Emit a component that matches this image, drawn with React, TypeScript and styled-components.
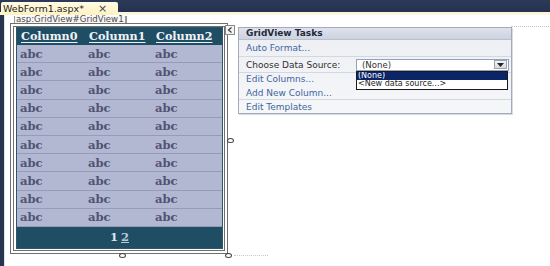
import { FC } from 'react';
import styled, { createGlobalStyle } from 'styled-components';

const GlobalStyle = createGlobalStyle`
  html, body {
    margin: 0;
    padding: 0;
    background: #ffffff;
  }
  #root {
    width: 550px;
    height: 266px;
    overflow: hidden;
  }
`;

const rows = Array.from({ length: 10 });
const columns = ['Column0', 'Column1', 'Column2'];

const App: FC = () => {
  return (
    <Page>
      <GlobalStyle />
      <TopBar>
        <Tab>
          WebForm1.aspx*
          <TabClose>×</TabClose>
        </Tab>
      </TopBar>
      <Body>
        <LeftStrip />
        <Designer>
          <TagLabel>asp:GridView#GridView1</TagLabel>
          <DesignRow>
            <Frame>
              <Grid>
                <GridRow $head>
                  {columns.map((c) => (
                    <HeadCell key={c}>{c}</HeadCell>
                  ))}
                </GridRow>
                {rows.map((_, i) => (
                  <GridRow key={i}>
                    <Cell>abc</Cell>
                    <Cell>abc</Cell>
                    <Cell>abc</Cell>
                  </GridRow>
                ))}
                <Pager>
                  <PageCurrent>1</PageCurrent>
                  <PageLink>2</PageLink>
                </Pager>
              </Grid>
              <SmartTag>
                <svg width='6' height='6' viewBox='0 0 6 6'>
                  <path d='M4.5 0.5 L1.5 3 L4.5 5.5' fill='none' stroke='#333' strokeWidth='1.1' />
                </svg>
              </SmartTag>
              <Handle $left={105} $top={226} />
              <Handle $left={213} $top={111} />
              <Handle $left={211} $top={226} />
              <Trail />
            </Frame>
            <TaskPanel>
              <PanelHeader>GridView Tasks</PanelHeader>
              <Section $h={16}>
                <TaskLink>Auto Format...</TaskLink>
              </Section>
              <Section $h={15}>
                <ChooseLabel>Choose Data Source:</ChooseLabel>
                <Combo>
                  <ComboValue>(None)</ComboValue>
                  <ComboButton>
                    <svg width='7' height='4' viewBox='0 0 7 4'>
                      <path d='M0 0 H7 L3.5 4 Z' fill='#222' />
                    </svg>
                  </ComboButton>
                  <DropList>
                    <DropItem $selected>(None)</DropItem>
                    <DropItem>&lt;New data source...&gt;</DropItem>
                  </DropList>
                </Combo>
              </Section>
              <Section $h={26} $column>
                <TaskLink>Edit Columns...</TaskLink>
                <TaskLink>Add New Column...</TaskLink>
              </Section>
              <Section $h={13} $last>
                <TaskLink>Edit Templates</TaskLink>
              </Section>
            </TaskPanel>
          </DesignRow>
        </Designer>
      </Body>
    </Page>
  );
};

export default App;

const Page = styled.div`
  width: 550px;
  height: 266px;
  display: flex;
  flex-direction: column;
  background: #ffffff;
  font-family: 'DejaVu Sans', Verdana, sans-serif;
`;

const TopBar = styled.div`
  height: 15px;
  flex-shrink: 0;
  display: flex;
  align-items: flex-end;
  background: linear-gradient(to bottom, #2b3a58 0, #25324e 12px, #fbf3d2 12px, #fdf8e6 15px);
`;

const Tab = styled.div`
  height: 13px;
  width: 117px;
  margin-left: 1px;
  box-sizing: border-box;
  padding-left: 2px;
  display: flex;
  align-items: center;
  background: linear-gradient(to bottom, #fffbe4, #fdf1c2);
  color: #1c1c1c;
  font-size: 9.5px;
  line-height: 13px;
  border-radius: 2px 2px 0 0;
`;

const TabClose = styled.span`
  margin-left: 14px;
  font-size: 11px;
  color: #444;
`;

const Body = styled.div`
  flex: 1;
  display: flex;
`;

const LeftStrip = styled.div`
  width: 4px;
  background: #27354f;
  border-right: 1px solid #dfe3ea;
`;

const Designer = styled.div`
  flex: 1;
  display: flex;
  flex-direction: column;
  padding-left: 5px;
`;

const TagLabel = styled.div`
  align-self: flex-start;
  margin: 1px 0 0 4px;
  height: 7px;
  padding: 0 1px;
  border-left: 1px solid #9a9a9a;
  border-right: 2px solid #9a9a9a;
  background: #f7f7f7;
  color: #4a4a4a;
  font-size: 8.6px;
  line-height: 7px;
  white-space: nowrap;
`;

const DesignRow = styled.div`
  display: flex;
  align-items: flex-start;
`;

const Frame = styled.div`
  position: relative;
  width: 218px;
  height: 231px;
  box-sizing: border-box;
  border: 4px double #6f6f6f;
  padding: 0 1px 1px 2px;
`;

const Grid = styled.div`
  width: 207px;
  height: 222px;
  box-sizing: border-box;
  border: 1px solid #2b566b;
  display: flex;
  flex-direction: column;
  background: #b3b8d2;
  font-family: 'DejaVu Serif', 'Liberation Serif', serif;
`;

const GridRow = styled.div<{ $head?: boolean }>`
  display: grid;
  grid-template-columns: 68px 67px 1fr;
  height: ${({ $head }) => ($head ? '17px' : '18.2px')};
  box-sizing: border-box;
  align-items: center;
  background: ${({ $head }) => ($head ? '#1f4d64' : '#b3b8d2')};
  border-bottom: 1px solid ${({ $head }) => ($head ? '#1f4d64' : '#959bb8')};
`;

const HeadCell = styled.span`
  padding-left: 4px;
  color: #eef2f6;
  font-weight: 700;
  font-size: 11.2px;
  text-decoration: underline;
  text-underline-offset: 2px;
`;

const Cell = styled.span`
  padding-left: 3px;
  color: #505372;
  font-weight: 700;
  font-size: 11.6px;
`;

const Pager = styled.div`
  flex: 1;
  display: flex;
  align-items: center;
  justify-content: center;
  gap: 3px;
  background: #1f4d64;
  font-size: 11.5px;
  font-weight: 700;
`;

const PageCurrent = styled.span`
  color: #dfe5ea;
`;

const PageLink = styled.span`
  color: #b9c7d6;
  text-decoration: underline;
`;

const SmartTag = styled.div`
  position: absolute;
  left: 211px;
  top: -2px;
  width: 10px;
  height: 10px;
  box-sizing: border-box;
  border: 1px solid #8a8a8a;
  background: #f3f3f3;
  display: flex;
  align-items: center;
  justify-content: center;
`;

const Handle = styled.div<{ $left: number; $top: number }>`
  position: absolute;
  left: ${({ $left }) => $left}px;
  top: ${({ $top }) => $top}px;
  width: 7px;
  height: 5px;
  box-sizing: border-box;
  border: 1px solid #444;
  border-radius: 50%;
  background: #ffffff;
`;

const Trail = styled.div`
  position: absolute;
  left: 220px;
  top: 228px;
  width: 34px;
  border-top: 1px dotted #c9c9c9;
`;

const TaskPanel = styled.div`
  position: relative;
  margin: 4px 0 0 10px;
  width: 274px;
  box-sizing: border-box;
  border: 1px solid #a2aabb;
  background: linear-gradient(to bottom, #eceef3, #f6f7f9);
  box-shadow: 1px 1px 0 #d9dbe0;
  display: flex;
  flex-direction: column;

  &::after {
    content: '';
    position: absolute;
    left: 100%;
    top: -2px;
    width: 40px;
    border-top: 1px dotted #c4c4c4;
  }
`;

const PanelHeader = styled.div`
  height: 11px;
  padding-left: 7px;
  background: linear-gradient(to bottom, #dde2eb, #cdd3df);
  border-bottom: 1px solid #b8bfcd;
  color: #1f2a3c;
  font-weight: 700;
  font-size: 9px;
  line-height: 11px;
`;

const Section = styled.div<{ $h: number; $column?: boolean; $last?: boolean }>`
  height: ${({ $h }) => $h}px;
  padding-left: 7px;
  display: flex;
  flex-direction: ${({ $column }) => ($column ? 'column' : 'row')};
  justify-content: ${({ $column }) => ($column ? 'center' : 'flex-start')};
  align-items: ${({ $column }) => ($column ? 'flex-start' : 'center')};
  gap: ${({ $column }) => ($column ? '4px' : '0')};
  border-bottom: ${({ $last }) => ($last ? 'none' : '1px solid #d3d7df')};
`;

const TaskLink = styled.span`
  color: #41659c;
  font-size: 9px;
  line-height: 10px;
`;

const ChooseLabel = styled.span`
  width: 110px;
  color: #303030;
  font-size: 9px;
`;

const Combo = styled.div`
  position: relative;
  width: 153px;
  height: 12px;
  box-sizing: border-box;
  border: 1px solid #8fa3bd;
  background: #ffffff;
  display: flex;
  align-items: center;
`;

const ComboValue = styled.span`
  flex: 1;
  padding-left: 5px;
  color: #333;
  font-size: 8.6px;
  line-height: 10px;
`;

const ComboButton = styled.div`
  width: 13px;
  height: 9px;
  margin-right: 1px;
  box-sizing: border-box;
  border: 1px solid #9aa3b3;
  background: linear-gradient(to bottom, #f4f5f7, #d6d9df);
  display: flex;
  align-items: center;
  justify-content: center;
`;

const DropList = styled.div`
  position: absolute;
  left: -1px;
  top: calc(100% + 1px);
  width: 152px;
  box-sizing: border-box;
  border: 1px solid #1a1a1a;
  background: #ffffff;
  display: flex;
  flex-direction: column;
`;

const DropItem = styled.div<{ $selected?: boolean }>`
  height: 8.5px;
  padding-left: 1px;
  background: ${({ $selected }) => ($selected ? '#0b2566' : '#ffffff')};
  color: ${({ $selected }) => ($selected ? '#ffffff' : '#222')};
  font-size: 8px;
  line-height: 8.5px;
  white-space: nowrap;
  overflow: hidden;
`;
